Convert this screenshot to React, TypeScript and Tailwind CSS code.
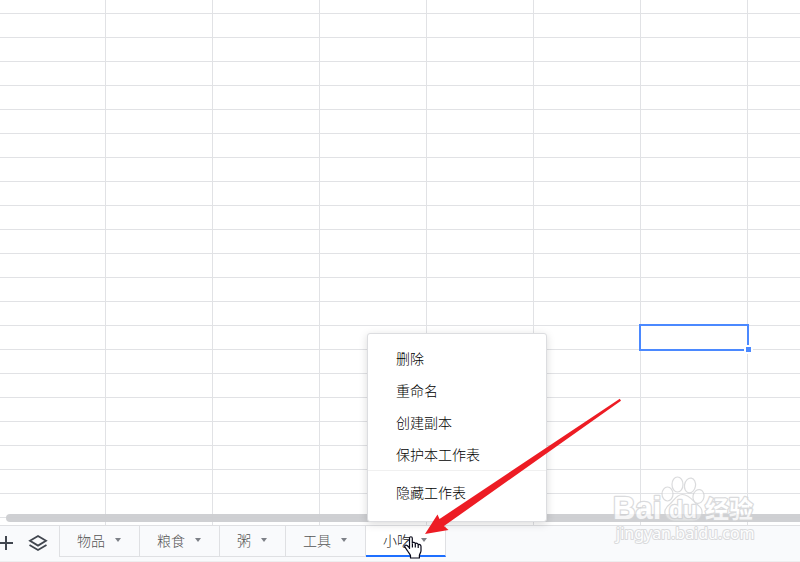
const columns = [0, 1, 2, 3, 4, 5, 6, 7];
const rows = Array.from({ length: 23 }, (_, i) => i);
const selected = { row: 14, column: 6 };

const sheets = [
  { name: "物品", active: false },
  { name: "粮食", active: false },
  { name: "粥", active: false },
  { name: "工具", active: false },
  { name: "小吃", active: true },
];

const actions = ["删除", "重命名", "创建副本", "保护本工作表"];

function Grid() {
  return (
    <table className="w-full table-fixed border-separate border-spacing-0">
      <colgroup>
        {columns.map((c) => (
          <col key={c} className={c === 0 ? "w-[106px]" : c === 7 ? "" : "w-[107px]"} />
        ))}
      </colgroup>
      <tbody>
        {rows.map((r) => (
          <tr key={r} className={r === 0 ? "h-[14px]" : "h-6"}>
            {columns.map((c) => (
              <td
                key={c}
                className={`relative border-b border-[#e1e2e5] p-0 ${c === 7 ? "" : "border-r"}`}
              >
                {r === selected.row && c === selected.column && (
                  <div className="absolute -inset-0.5 z-10 border-2 border-[#4b89ff]">
                    <span className="absolute -right-1.5 -bottom-[5px] size-[9px] border-2 border-white bg-[#4b89ff]" />
                  </div>
                )}
              </td>
            ))}
          </tr>
        ))}
      </tbody>
    </table>
  );
}

function SheetMenu() {
  return (
    <div
      role="menu"
      className="absolute bottom-full left-0 z-10 mb-1 ml-px w-[180px] rounded-[3px] border border-[#dcdde0] bg-white pt-2 pb-[13px] shadow-[0_2px_8px_rgba(0,0,0,0.15)]"
    >
      {actions.map((label) => (
        <button
          key={label}
          type="button"
          role="menuitem"
          className="block h-8 w-full px-7 text-left text-sm text-black"
        >
          {label}
        </button>
      ))}
      <hr className="mb-[5px] border-[#f0f0f0]" />
      <button
        type="button"
        role="menuitem"
        className="block h-8 w-full px-7 text-left text-sm text-black"
      >
        隐藏工作表
      </button>
    </div>
  );
}

function Caret() {
  return (
    <svg viewBox="0 0 6 4" className="h-1 w-1.5" aria-hidden="true">
      <path d="M0 0h6L3 4z" fill="#7d8087" />
    </svg>
  );
}

function HandCursor() {
  return (
    <svg
      viewBox="0 0 18 23"
      className="pointer-events-none absolute top-2.5 left-[38px] z-20 h-[23px] w-[18px]"
      aria-hidden="true"
    >
      <path
        d="M5.5 13V2.300C5.500.2 8.300.2 8.300 2.300v4.600c.6-1 2.900-.8 3 .8.8-.9 2.800-.5 2.900 1 .9-.7 2.800 0 2.800 1.700v4.400c0 1.700-1.600 3.300-1.600 4.700V22H6.500v-2.200c0-1.300-2-3-3-5L1 11.200c-1-1.600.9-2.800 2.100-1.700l2.400 2.300"
        fill="#fff"
        stroke="#080818"
        strokeWidth="1.200"
        strokeLinejoin="round"
      />
      <path d="M8.400 7.500V11.500M11.300 8V11.500M14.200 9.100V12" fill="none" stroke="#080818" strokeWidth="1.200" />
    </svg>
  );
}

function Arrow() {
  return (
    <svg
      viewBox="0 0 198 138"
      className="pointer-events-none absolute bottom-[26px] left-[424px] z-20 h-[138px] w-[198px]"
      aria-hidden="true"
    >
      <path d="M1 136 13.500 116.500 15.500 121 195.800.8 197 2.800 20 128 24.500 132z" fill="#ed1c24" />
    </svg>
  );
}

function Watermark() {
  return (
    <svg
      viewBox="0 0 144 72"
      className="pointer-events-none absolute right-[44px] bottom-[14px] z-10 h-[72px] w-[144px] opacity-80"
      fill="#fff"
      stroke="#d2d3d5"
      strokeWidth="1.200"
      strokeLinejoin="round"
    >
      <g fillOpacity="0.5">
        <ellipse cx="55.500" cy="18" rx="5.500" ry="7" />
        <ellipse cx="65.500" cy="8.500" rx="5.500" ry="7.500" />
        <ellipse cx="78" cy="9.500" rx="5.500" ry="7.500" transform="rotate(10 78 9.5)" />
        <ellipse cx="86.500" cy="20.500" rx="5.500" ry="7" transform="rotate(12 86.5 20.5)" />
        <path d="M70.500 18.500c-6 0-8 5-12 9-4 3-6.500 6-5.500 10 1 5 5 8 10 7.500h16c6 .5 10-2.500 11-7.500.5-5-2-7-6-10-4-4-7.500-9-13.500-9z" />
      </g>
      <g paintOrder="stroke" strokeWidth="2.500">
        <text x="1" y="43" fontSize="31" fontWeight="700" fontFamily="Liberation Sans, sans-serif">
          Bai
        </text>
        <text x="57" y="42" fontSize="23" fontWeight="700" fontFamily="Liberation Sans, sans-serif">
          du
        </text>
        <text x="93" y="42" fontSize="24" fontWeight="700" fontFamily="Noto Sans CJK SC, sans-serif">
          经验
        </text>
        <text x="4" y="63" fontSize="16" fontWeight="400" strokeWidth="2" fontFamily="Noto Sans, sans-serif">
          jingyan.baidu.com
        </text>
      </g>
    </svg>
  );
}

function SheetBar() {
  return (
    <footer className="relative flex h-[37px] shrink-0 items-start border-y border-t-[#dfe0e3] border-b-[#eeeeef] bg-[#f9fafc]">
      <button type="button" aria-label="Add sheet" className="flex h-[34px] w-5 items-center">
        <svg viewBox="0 0 14 14" className="h-3.5 w-3.5" fill="none" stroke="#41464f" strokeWidth="2">
          <path d="M0 7h13M6 0v14" />
        </svg>
      </button>
      <button type="button" aria-label="All sheets" className="flex h-[34px] w-[39px] items-center pl-2">
        <svg viewBox="0 0 20 18" className="h-[18px] w-5" fill="none" stroke="#41464f" strokeWidth="1.800">
          <path d="M10 2 18 6.800 10 11.600 2 6.800z" />
          <path d="M1.500 11 10 16 18.500 11" />
        </svg>
      </button>
      <nav className="flex border-l border-[#dfe0e3]">
        {sheets.map((sheet) => (
          <div key={sheet.name} className="relative">
            <button
              type="button"
              className={`flex h-[31px] items-center gap-2.5 border-r border-r-[#dfe0e3] pr-[18px] pl-[17px] text-sm ${
                sheet.active
                  ? "border-b-2 border-b-[#1e6fff] bg-white pb-px text-[#222]"
                  : "border-b border-b-[#dfe0e3] pb-0.5 text-[#555]"
              }`}
            >
              {sheet.name}
              <Caret />
            </button>
            {sheet.active && <SheetMenu />}
            {sheet.active && <HandCursor />}
          </div>
        ))}
      </nav>
    </footer>
  );
}

export default function App() {
  return (
    <div className="relative flex h-screen flex-col overflow-hidden bg-white font-['Noto_Sans_CJK_SC',sans-serif] font-light">
      <main className="relative min-h-0 flex-1 overflow-hidden">
        <Grid />
        <div className="absolute right-0 bottom-[3px] left-1.5 h-2 rounded-l-full bg-[#cccdd1]/95" />
      </main>
      <SheetBar />
      <Watermark />
      <Arrow />
    </div>
  );
}
